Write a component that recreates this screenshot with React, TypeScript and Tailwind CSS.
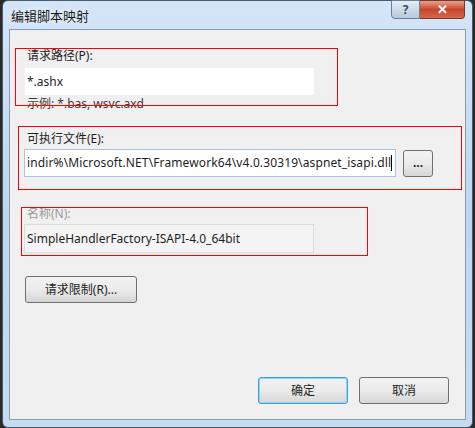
import React from 'react';

const ui = { fontFamily: '"Noto Sans", "Noto Sans CJK SC", sans-serif' };

function Btn({ label, focused, className }: { label: string; focused?: boolean; className?: string }) {
  return (
    <button
      className={`h-[27px] rounded-[3px] border text-[12px] text-[#1e1e1e] bg-gradient-to-b from-[#f2f2f2] via-[#ebebeb] to-[#d6d6d6] ${
        focused ? 'border-[#3c9fe0] shadow-[inset_0_0_0_1px_#8fd3f8]' : 'border-[#707070]'
      } ${className ?? ''}`}
    >
      {label}
    </button>
  );
}

function RedBox({ className }: { className: string }) {
  return <div className={`absolute shadow-[inset_0_0_0_1px_#ff0000] pointer-events-none ${className}`} />;
}

export default function App() {
  return (
    <div className="relative w-[475px] h-[428px] overflow-hidden bg-[#2a2a2a]" style={ui}>
      {/* window frame */}
      <div className="absolute left-[2px] top-0 w-[471px] h-[428px] rounded-[6px] border border-[#4a5a6e] bg-gradient-to-b from-[#d4e5f7] via-[#bfd5ee] to-[#c6dcf2] flex flex-col px-[6px] pb-[7px]">
        {/* title bar */}
        <div className="h-[28px] flex items-start shrink-0">
          <div className="pt-[6px] pl-[2px] text-[13px] text-[#1a1a1a] [text-shadow:0_0_6px_#ffffff]">编辑脚本映射</div>
          <div className="ml-auto flex -mt-px mr-[1px]">
            <div className="w-[29px] h-[19px] rounded-bl-[4px] border border-[#6f7f92] bg-gradient-to-b from-[#e4edf7] to-[#b8c9dc] flex items-center justify-center text-[12px] font-bold text-[#3c4a5a]">?</div>
            <div className="w-[45px] h-[19px] rounded-br-[4px] border border-l-0 border-[#6f3a32] bg-gradient-to-b from-[#e8a08c] via-[#c8452c] to-[#d6664a] flex items-center justify-center text-[13px] font-bold text-white">✕</div>
          </div>
        </div>

        {/* client area */}
        <div className="relative flex-1 border border-[#8a9bb0] bg-[#f0f0f0] flex flex-col pl-[14px] text-[12px] text-[#1e1e1e]">
          <div className="mt-[18px] pl-[3px] leading-[15px]">请求路径(P):</div>
          <div className="mt-[4px] w-[291px] h-[29px] bg-white border border-[#f0f0f0] pl-[2px] flex items-center">*.ashx</div>
          <div className="mt-[1px] pl-[3px] leading-[14px] text-[#3c3c3c]">示例: *.bas, wsvc.axd</div>

          <div className="mt-[20px] pl-[3px] leading-[15px]">可执行文件(E):</div>
          <div className="mt-[3px] flex items-center">
            <div className="w-[372px] h-[28px] bg-white border border-[#a8c4de] pl-[2px] flex items-center whitespace-nowrap overflow-hidden tracking-[0.12px]">
              indir%\Microsoft.NET\Framework64\v4.0.30319\aspnet_isapi.dll<span className="inline-block w-px h-[16px] bg-black" />
            </div>
            <Btn label="..." className="ml-[7px] w-[30px] h-[26px] font-bold" />
          </div>

          <div className="mt-[30px] pl-[3px] leading-[14px] text-[#9a9a9a]">名称(N):</div>
          <div className="mt-[3px] w-[290px] h-[29px] bg-[#f4f4f4] border border-[#dcdcdc] pl-[2px] flex items-center">SimpleHandlerFactory-ISAPI-4.0_64bit</div>

          <Btn label="请求限制(R)..." className="mt-[23px] ml-[1px] w-[112px]" />

          <div className="mt-auto mb-[15px] flex justify-end gap-[11px] pr-[16px]">
            <Btn label="确定" focused className="w-[90px]" />
            <Btn label="取消" className="w-[90px]" />
          </div>

          {/* red annotation boxes */}
          <RedBox className="left-[5px] top-[18px] w-[323px] h-[58px]" />
          <RedBox className="left-[8px] top-[96px] w-[444px] h-[64px]" />
          <RedBox className="left-[11px] top-[177px] w-[347px] h-[49px]" />
        </div>
      </div>
    </div>
  );
}
